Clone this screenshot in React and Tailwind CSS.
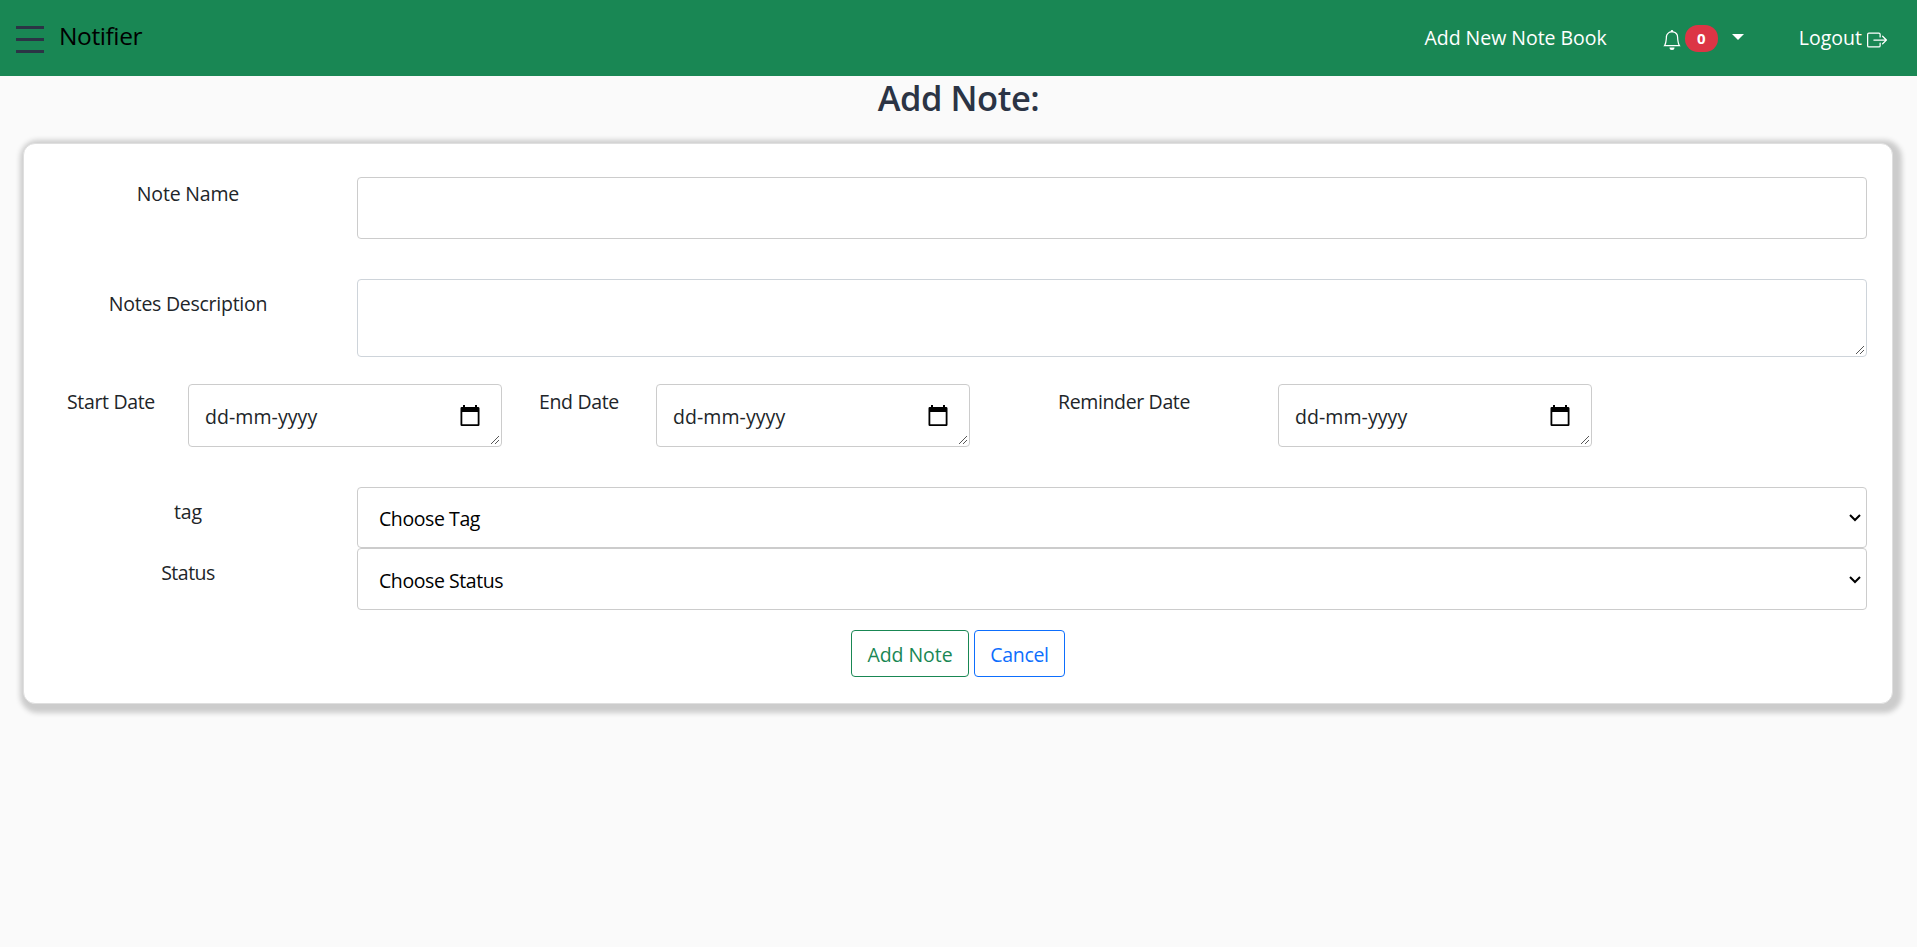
import React from "react";

function BellIcon() {
  return (
    <svg width="20" height="20" viewBox="0 0 16 16" fill="currentColor">
      <path d="M8 16a2 2 0 0 0 2-2H6a2 2 0 0 0 2 2zM8 1.918l-.797.161A4.002 4.002 0 0 0 4 6c0 .628-.134 2.197-.459 3.742-.16.767-.376 1.566-.663 2.258h10.244c-.287-.692-.502-1.49-.663-2.258C12.134 8.197 12 6.628 12 6a4.002 4.002 0 0 0-3.203-3.92L8 1.917zM14.22 12c.223.447.481.801.78 1H1c.299-.199.557-.553.78-1C2.68 10.2 3 6.88 3 6c0-2.42 1.72-4.44 4.005-4.901a1 1 0 1 1 1.99 0A5.002 5.002 0 0 1 13 6c0 .88.32 4.2 1.22 6z" />
    </svg>
  );
}

function LogoutIcon() {
  return (
    <svg width="20" height="20" viewBox="0 0 16 16" fill="currentColor" fillRule="evenodd">
      <path d="M10 12.5a.5.5 0 0 1-.5.5h-8a.5.5 0 0 1-.5-.5v-9a.5.5 0 0 1 .5-.5h8a.5.5 0 0 1 .5.5v2a.5.5 0 0 0 1 0v-2A1.5 1.5 0 0 0 9.500 2h-8A1.500 1.500 0 0 0 0 3.500v9A1.500 1.500 0 0 0 1.500 14h8a1.500 1.500 0 0 0 1.500-1.500v-2a.5.5 0 0 0-1 0v2z" />
      <path d="M15.854 8.354a.5.5 0 0 0 0-.708l-3-3a.5.5 0 0 0-.708.708L14.293 7.500H5.500a.5.5 0 0 0 0 1h8.793l-2.147 2.146a.5.5 0 0 0 .708.708l3-3z" />
    </svg>
  );
}

function ResizeGrip() {
  return (
    <svg className="absolute bottom-[2px] right-[2px]" width="8" height="8" viewBox="0 0 8 8" stroke="#444" strokeWidth="0.9">
      <path d="M0 8L8 0M4 8l4-4" />
    </svg>
  );
}

function DateField() {
  return (
    <div className="relative flex h-[63px] w-[314px] items-start justify-between rounded border border-[#ccc] bg-white pl-[16px] pr-[21px]">
      <span className="mt-[17px] leading-[30px] tracking-[0.07px]">dd-mm-yyyy</span>
      <svg className="mt-[20px]" width="20" height="22" viewBox="0 0 20 22" fill="#000">
        <path d="M3 0h2v2h10V0h2v2h1.500A1.200 1.200 0 0 1 19.500 3.200v16.600a1.200 1.200 0 0 1-1.200 1.200H1.700a1.200 1.200 0 0 1-1.200-1.200V3.200A1.200 1.200 0 0 1 1.700 2H3zM2.300 7v12.200h15.400V7z" fillRule="evenodd" />
      </svg>
      <ResizeGrip />
    </div>
  );
}

function SelectField({ label, className }) {
  return (
    <div className={"flex w-[1510px] items-start justify-between rounded border border-[#ccc] bg-white pl-[21px] pr-[5px] text-black " + className}>
      <span className="mt-[16px] leading-[30px] tracking-[-0.42px]">{label}</span>
      <svg className="mt-[26px]" width="12" height="8" viewBox="0 0 12 8" fill="none" stroke="#000" strokeWidth="2">
        <path d="M1 1l5 5 5-5" />
      </svg>
    </div>
  );
}

export default function App() {
  return (
    <div className="h-[947px] w-full overflow-hidden bg-[#fafafa] font-['Open_Sans','Noto_Sans',sans-serif] text-[19.5px] text-[#212529]">
      <nav className="flex h-[76px] items-start bg-[#198754]">
        <div className="ml-4 mt-[26px] flex h-[27px] w-7 flex-col justify-between">
          <span className="h-[3px] bg-[#2b3445]" />
          <span className="h-[3px] bg-[#2b3445]" />
          <span className="h-[3px] bg-[#2b3445]" />
        </div>
        <span className="ml-[15px] mt-[18px] text-[24.5px] leading-[36px] tracking-[-0.4px] text-black">Notifier</span>
        <div className="ml-auto flex items-start text-white">
          <span className="mr-[55px] mt-[23px] leading-[30px] tracking-[-0.03px]">Add New Note Book</span>
          <span className="mt-[30px]"><BellIcon /></span>
          <span className="ml-[3px] mt-[25px] flex h-[27px] w-[33px] items-center justify-center rounded-[13px] bg-[#dc3545] text-[15px] font-bold">0</span>
          <svg className="ml-[14px] mt-[34px]" width="12" height="6" viewBox="0 0 12 6" fill="currentColor">
            <path d="M0 0h12l-6 6z" />
          </svg>
          <span className="ml-[55px] mt-[23px] leading-[30px] tracking-[0.02px]">Logout</span>
          <span className="ml-[5px] mr-[30px] mt-[30px]"><LogoutIcon /></span>
        </div>
      </nav>

      <h2 className="h-[67px] text-center text-[34.5px] font-semibold leading-[44px] tracking-[-0.45px] text-[#2b3445]">Add Note:</h2>

      <main className="mx-[23px] h-[561px] w-[1870px] rounded-[12px] border border-[#dfdfdf] bg-white pt-[33px] shadow-[3px_3px_5px_6px_#ccc]">
        <div className="flex h-[102px]">
          <label className="w-[333px] pr-[5px] pt-[2px] text-center leading-[30px] tracking-[-0.18px]">Note Name</label>
          <input className="h-[62px] w-[1510px] rounded border border-[#ccc] bg-white" />
        </div>
        <div className="flex h-[105px]">
          <label className="w-[333px] pr-[5px] pt-[10px] text-center leading-[30px] tracking-[-0.26px]">Notes Description</label>
          <div className="relative h-[78px] w-[1510px]">
            <textarea className="block h-full w-full resize-none rounded border border-[#ced4da] bg-white" />
            <span className="absolute bottom-[1px] right-[1px] h-2.5 w-2.5"><ResizeGrip /></span>
          </div>
        </div>
        <div className="flex h-[103px]">
          <label className="w-[164px] pl-[43px] pt-[3px] leading-[30px] tracking-[-0.34px]">Start Date</label>
          <DateField />
          <label className="w-[154px] pl-[37px] pt-[3px] leading-[30px] tracking-[-0.34px]">End Date</label>
          <DateField />
          <label className="w-[308px] pl-[88px] pt-[3px] leading-[30px] tracking-[-0.36px]">Reminder Date</label>
          <DateField />
        </div>
        <div className="flex h-[61px]">
          <label className="w-[333px] pr-[5px] pt-[10px] text-center leading-[30px] tracking-[-0.18px]">tag</label>
          <SelectField label="Choose Tag" className="h-[61px]" />
        </div>
        <div className="flex h-[82px]">
          <label className="w-[333px] pr-[5px] pt-[10px] text-center leading-[30px] tracking-[-0.5px]">Status</label>
          <SelectField label="Choose Status" className="h-[62px] pt-[1px]" />
        </div>
        <div className="flex gap-[5px] pl-[827px]">
          <button className="h-[47px] w-[118px] rounded border border-[#198754] pt-[2px] tracking-[-0.05px] text-[#198754]">Add Note</button>
          <button className="h-[47px] w-[91px] rounded border border-[#0d6efd] pt-[2px] tracking-[-0.3px] text-[#0d6efd]">Cancel</button>
        </div>
      </main>
    </div>
  );
}
